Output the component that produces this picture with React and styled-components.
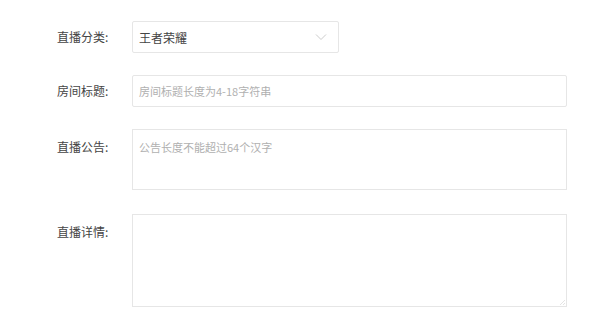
import React from 'react';
import styled, { createGlobalStyle } from 'styled-components';

const GlobalStyle = createGlobalStyle`
  html, body {
    margin: 0;
    padding: 0;
    background: #fff;
    font-family: "Noto Sans CJK SC", "Noto Sans", sans-serif;
  }
`;

const Form = styled.div`
  padding: 21px 0 0 57px;
  display: flex;
  flex-direction: column;
`;

const Row = styled.div`
  display: flex;
  align-items: ${p => (p.$top ? 'flex-start' : 'center')};
  margin-bottom: ${p => p.$gap || 22}px;
`;

const Label = styled.div`
  width: 75px;
  flex-shrink: 0;
  font-size: 12px;
  color: #444;
  line-height: 16px;
  padding-top: ${p => (p.$top ? '10px' : '0')};
`;

const Select = styled.div`
  box-sizing: border-box;
  width: 207px;
  height: 32px;
  border: 1px solid #e6e6e6;
  border-radius: 2px;
  display: flex;
  align-items: center;
  justify-content: space-between;
  padding: 0 11px 0 6px;
  font-size: 12px;
  color: #444;
`;

const Input = styled.div`
  box-sizing: border-box;
  width: 435px;
  height: 32px;
  border: 1px solid #e6e6e6;
  border-radius: 2px;
  display: flex;
  align-items: center;
  padding: 0 6px;
  font-size: 11px;
  color: #b0b0b0;
`;

const TextArea = styled.div`
  position: relative;
  box-sizing: border-box;
  width: 435px;
  height: ${p => p.$h}px;
  border: 1px solid #e6e6e6;
  padding: 9px 6px;
  font-size: 11px;
  line-height: 16px;
  color: #b0b0b0;
`;

const Grip = styled.svg`
  position: absolute;
  right: 0;
  bottom: 0;
`;

const Chevron = () => (
  <svg width="12" height="8" viewBox="0 0 12 8">
    <path d="M1 1.5 L6 6.5 L11 1.5" fill="none" stroke="#ccc" strokeWidth="1" />
  </svg>
);

export default function App() {
  return (
    <>
      <GlobalStyle />
      <Form>
        <Row>
          <Label>直播分类:</Label>
          <Select>
            <span>王者荣耀</span>
            <Chevron />
          </Select>
        </Row>
        <Row>
          <Label>房间标题:</Label>
          <Input>房间标题长度为4-18字符串</Input>
        </Row>
        <Row $top $gap={24}>
          <Label $top>直播公告:</Label>
          <TextArea $h={61}>公告长度不能超过64个汉字</TextArea>
        </Row>
        <Row $top>
          <Label $top>直播详情:</Label>
          <TextArea $h={93}>
            <Grip width="8" height="8" viewBox="0 0 8 8">
              <path d="M7 2 L2 7 M7 5 L5 7" stroke="#e4e4e4" strokeWidth="1" />
            </Grip>
          </TextArea>
        </Row>
      </Form>
    </>
  );
}
